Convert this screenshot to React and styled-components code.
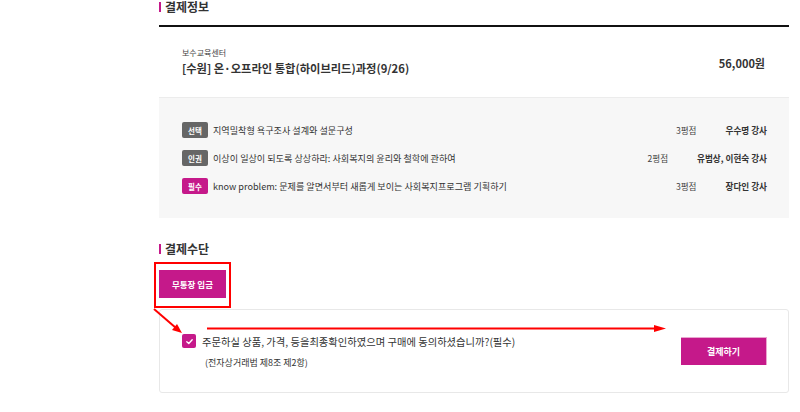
import React from "react";
import styled, { createGlobalStyle } from "styled-components";

const MAGENTA = "#c5198a";

const GlobalStyle = createGlobalStyle`
  html, body {
    margin: 0;
    padding: 0;
    background: #fff;
  }
  body {
    font-family: "Noto Sans CJK KR", "Noto Sans", sans-serif;
    color: #333;
  }
`;

const Page = styled.div`
  position: relative;
  width: 800px;
  height: 412px;
  overflow: hidden;
  padding-left: 159px;
  box-sizing: border-box;
`;

const Content = styled.div`
  width: 630px;
`;

const SectionTitle = styled.h3`
  display: flex;
  align-items: center;
  height: 12px;
  margin: ${(p) => p.$top || 0}px 0 0 0;
  padding-top: 1px;
  font-size: 12px;
  font-weight: 700;
  color: #333;
  line-height: 12px;

  &::before {
    content: "";
    width: 2px;
    height: 10px;
    background: ${MAGENTA};
    margin-right: 4px;
  }
`;

const Rule = styled.div`
  margin-top: 12px;
  border-top: 2px solid #111;
`;

const Product = styled.div`
  display: flex;
  align-items: center;
  justify-content: space-between;
  height: 70px;
  padding: 0 24px 0 23px;
`;

const ProductInfo = styled.div`
  display: flex;
  flex-direction: column;
  gap: 2px;
`;

const Center = styled.span`
  font-size: 8px;
  line-height: 10px;
  color: #444;
`;

const CourseTitle = styled.span`
  font-size: 11.25px;
  line-height: 16px;
  font-weight: 700;
  color: #333;
`;

const Price = styled.span`
  font-size: 11px;
  font-weight: 700;
  color: #333;
  margin-top: 2px;
`;

const Lectures = styled.div`
  background: #f7f7f7;
  border-top: 1px solid #ececec;
  padding: 24px 22px 24px 23px;
  display: flex;
  flex-direction: column;
  gap: 12px;
`;

const LectureRow = styled.div`
  display: flex;
  align-items: center;
  height: 16px;
  font-size: 9.1px;
  color: #333;
`;

const Badge = styled.span`
  flex: none;
  width: 26px;
  height: 16px;
  border-radius: 2px;
  background: ${(p) => (p.$required ? MAGENTA : "#666")};
  color: #fff;
  font-size: 7.5px;
  font-weight: 700;
  display: flex;
  align-items: center;
  justify-content: center;
  margin-right: 5px;
`;

const LectureName = styled.span`
  flex: 1;
  white-space: nowrap;
`;

const Score = styled.span`
  margin-right: 29px;
  color: #444;
  font-size: 8.6px;
`;

const Teacher = styled.span`
  font-weight: 700;
  color: #333;
  font-size: 8.6px;
`;

const MethodButton = styled.button`
  display: block;
  margin-top: 15px;
  width: 67px;
  height: 28px;
  border: none;
  background: ${MAGENTA};
  color: #fff;
  font-family: inherit;
  font-size: 8.5px;
  font-weight: 700;
  padding: 0;
`;

const AgreeBox = styled.div`
  margin-top: 11px;
  height: 84px;
  box-sizing: border-box;
  border: 1px solid #e8e8e8;
  border-radius: 3px;
  display: flex;
  align-items: center;
  justify-content: space-between;
  padding: 0 21px 0 22px;
`;

const AgreeText = styled.div`
  display: flex;
  flex-direction: column;
  margin-top: 1px;
`;

const AgreeRow = styled.label`
  display: flex;
  align-items: center;
  height: 14px;
  gap: 6px;
  font-size: 10.3px;
  color: #333;
`;

const Check = styled.span`
  width: 14px;
  height: 14px;
  border-radius: 2px;
  background: ${MAGENTA};
  display: flex;
  align-items: center;
  justify-content: center;
`;

const LawNote = styled.span`
  margin-top: 9px;
  padding-left: 23px;
  font-size: 9px;
  line-height: 12px;
  color: #333;
`;

const PayButton = styled.button`
  width: 86px;
  height: 28px;
  border: none;
  border-top: 1px solid #e9a6cf;
  border-right: 1px solid #e9a6cf;
  background: ${MAGENTA};
  color: #fff;
  font-family: inherit;
  font-size: 9px;
  font-weight: 700;
  padding: 0;
`;

const Markup = styled.svg`
  position: absolute;
  left: 0;
  top: 0;
  pointer-events: none;
`;

const lectures = [
  { type: "선택", name: "지역밀착형 욕구조사 설계와 설문구성", score: "3평점", teacher: "우수명 강사" },
  { type: "인권", name: "이상이 일상이 되도록 상상하라: 사회복지의 윤리와 철학에 관하여", score: "2평점", teacher: "유범상, 이현숙 강사" },
  { type: "필수", name: "know problem: 문제를 알면서부터 새롭게 보이는 사회복지프로그램 기획하기", score: "3평점", teacher: "장다인 강사", required: true },
];

export default function App() {
  return (
    <Page>
      <GlobalStyle />
      <Content>
        <SectionTitle>결제정보</SectionTitle>
        <Rule />
        <Product>
          <ProductInfo>
            <Center>보수교육센터</Center>
            <CourseTitle>[수원] 온·오프라인 통합(하이브리드)과정(9/26)</CourseTitle>
          </ProductInfo>
          <Price>56,000원</Price>
        </Product>
        <Lectures>
          {lectures.map((l) => (
            <LectureRow key={l.name}>
              <Badge $required={l.required}>{l.type}</Badge>
              <LectureName>{l.name}</LectureName>
              <Score>{l.score}</Score>
              <Teacher>{l.teacher}</Teacher>
            </LectureRow>
          ))}
        </Lectures>

        <SectionTitle $top={24}>결제수단</SectionTitle>
        <MethodButton>무통장 입금</MethodButton>

        <AgreeBox>
          <AgreeText>
            <AgreeRow>
              <Check>
                <svg width="9" height="9" viewBox="0 0 10 10">
                  <polyline points="2,5.2 4.2,7.2 8,3" fill="none" stroke="#fff" strokeWidth="1.5" strokeLinecap="round" strokeLinejoin="round" />
                </svg>
              </Check>
              주문하실 상품, 가격, 등을최종확인하였으며 구매에 동의하셨습니까?(필수)
            </AgreeRow>
            <LawNote>(전자상거래법 제8조 제2항)</LawNote>
          </AgreeText>
          <PayButton>결제하기</PayButton>
        </AgreeBox>
      </Content>

      <Markup width="800" height="412" viewBox="0 0 800 412">
        <rect x="155" y="263" width="75" height="44" fill="none" stroke="#ff0000" strokeWidth="2" />
        <line x1="154" y1="309" x2="176" y2="328" stroke="#ff0000" strokeWidth="2" />
        <polygon points="182,333 172,330 177,324" fill="#ff0000" />
        <line x1="207" y1="328.5" x2="656" y2="328.5" stroke="#ff0000" strokeWidth="2" />
        <polygon points="654,325 666,328.5 654,332" fill="#ff0000" />
      </Markup>
    </Page>
  );
}
